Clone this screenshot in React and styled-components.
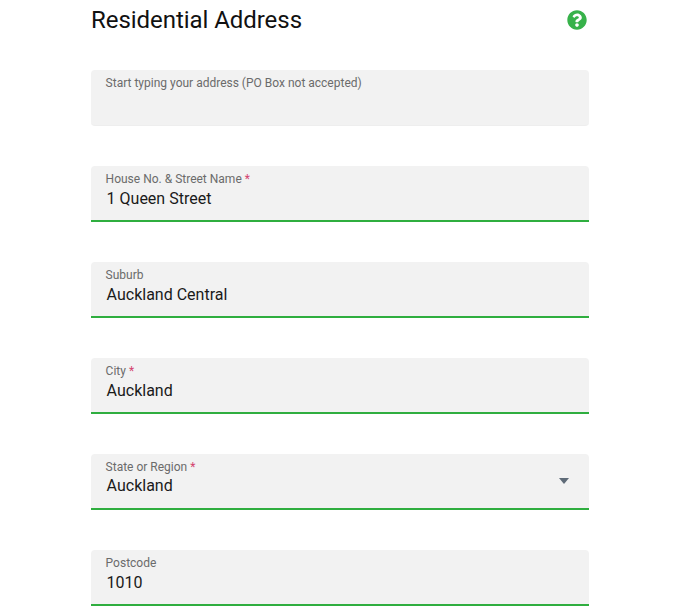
import React from 'react';
import styled, { createGlobalStyle } from 'styled-components';
import { FaQuestionCircle } from 'react-icons/fa';

const GlobalStyle = createGlobalStyle`
  html, body {
    margin: 0;
    background: #fff;
    overflow: hidden;
  }
  body {
    font-family: Roboto, "Liberation Sans", sans-serif;
  }
`;

const Page = styled.div`
  width: 498px;
  height: 614px;
  margin-left: 91px;
  overflow: hidden;
`;

const Header = styled.div`
  display: flex;
  justify-content: space-between;
  align-items: center;
  height: 40px;
  margin-bottom: 30px;
`;

const Title = styled.h2`
  margin: 0;
  font-size: 24px;
  font-weight: 400;
  line-height: 40px;
  letter-spacing: -0.05px;
  color: #111;
`;

const HelpIcon = styled(FaQuestionCircle)`
  width: 20px;
  height: 20px;
  margin-right: 2px;
  color: #37b24a;
`;

const Fields = styled.div`
  display: flex;
  flex-direction: column;
  gap: 40px;
`;

const Field = styled.div`
  position: relative;
  box-sizing: border-box;
  height: 56px;
  padding: 6px 15px 0 14.6px;
  background: #f2f2f2;
  border-radius: 4px 4px 0 0;
  border-bottom: 2px solid ${p => (p.$filled ? '#2fae3f' : 'transparent')};
  ${p => !p.$filled && 'border-radius: 4px; border-bottom: 1px solid #eee;'}
`;

const Label = styled.div`
  font-size: 12px;
  line-height: 14px;
  color: #6b6b6b;
`;

const Required = styled.span`
  color: #d4446f;
`;

const Value = styled.div`
  margin-top: ${p => (p.$select ? '2px' : '3px')};
  padding-left: 1px;
  font-size: 16px;
  line-height: 19px;
  color: #1a1a1a;
`;

const Caret = styled.span`
  position: absolute;
  right: 20px;
  top: 24px;
  width: 0;
  height: 0;
  border-left: 5px solid transparent;
  border-right: 5px solid transparent;
  border-top: 6px solid #5f6b78;
`;

const fields = [
  { label: 'Start typing your address (PO Box not accepted)' },
  { label: 'House No. & Street Name', required: true, value: '1 Queen Street' },
  { label: 'Suburb', value: 'Auckland Central' },
  { label: 'City', required: true, value: 'Auckland' },
  { label: 'State or Region', required: true, value: 'Auckland', select: true },
  { label: 'Postcode', value: '1010' },
];

export default function App() {
  return (
    <>
      <GlobalStyle />
      <Page>
        <Header>
          <Title>Residential Address</Title>
          <HelpIcon />
        </Header>
        <Fields>
          {fields.map(f => (
            <Field key={f.label} $filled={!!f.value}>
              <Label>
                {f.label}
                {f.required && <Required> *</Required>}
              </Label>
              {f.value && <Value $select={f.select}>{f.value}</Value>}
              {f.select && <Caret />}
            </Field>
          ))}
        </Fields>
      </Page>
    </>
  );
}
